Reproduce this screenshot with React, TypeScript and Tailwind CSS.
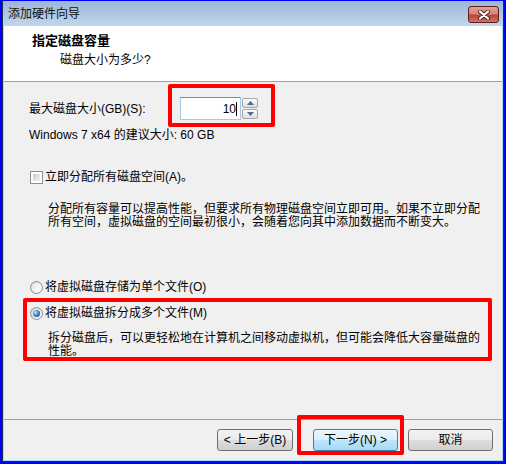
import React from 'react';

const font = "font-['Liberation_Sans','Noto_Sans_CJK_SC',sans-serif]";

const Radio: React.FC<{ checked?: boolean }> = ({ checked }) => (
  <div className="w-[13px] h-[13px] rounded-full border border-[#8e8f8f] bg-linear-to-br from-[#d4d4d4] to-[#fbfbfb] flex items-center justify-center shrink-0">
    {checked ? (
      <div className="w-[7px] h-[7px] rounded-full bg-[radial-gradient(circle_at_35%_35%,#bfe4fb,#2a6db8_60%,#1b4d8a)]" />
    ) : (
      <div className="w-[9px] h-[9px] rounded-full bg-linear-to-br from-[#e6e6e6] to-[#ffffff]" />
    )}
  </div>
);

const Checkbox: React.FC = () => (
  <div className="w-[13px] h-[13px] border border-[#8e8f8f] bg-white p-[2px] shrink-0">
    <div className="w-full h-full bg-linear-to-br from-[#cbcbcb] to-[#f6f6f6]" />
  </div>
);

const WinButton: React.FC<{ label: string; width: string; primary?: boolean; className?: string }> = ({
  label,
  width,
  primary,
  className,
}) => (
  <div
    className={
      primary
        ? `${width} ${className ?? ''} h-[22px] rounded-[3px] border border-[#3c7fb1] bg-[linear-gradient(#eaf6fd_0%,#d9f0fc_50%,#bee6fd_50%,#a7d9f5_100%)] flex items-center justify-center text-[12px] text-black`
        : `${width} ${className ?? ''} h-[22px] rounded-[3px] border border-[#707070] bg-[linear-gradient(#f2f2f2_0%,#ebebeb_50%,#dddddd_50%,#cfcfcf_100%)] flex items-center justify-center text-[12px] text-black`
    }
  >
    {label}
  </div>
);

const SpinArrow: React.FC<{ up?: boolean }> = ({ up }) => (
  <div className="w-[16px] h-[10px] border border-[#a7a7a7] rounded-[2px] bg-linear-to-b from-[#fbfbfb] to-[#dedede] flex items-center justify-center">
    <svg width="7" height="4" viewBox="0 0 7 4">
      {up ? <polygon points="0,4 7,4 3.5,0" fill="#4f6a92" /> : <polygon points="0,0 7,0 3.5,4" fill="#4f6a92" />}
    </svg>
  </div>
);

export default function App() {
  return (
    <div className={`relative w-[506px] h-[464px] bg-[#0000ff] px-[2px] pb-[2px] pt-[1px] ${font} text-black`}>
      <div className="h-full flex flex-col border-x border-b border-[#1c2c4c]">
        {/* title bar */}
        <div className="h-[25px] shrink-0 flex items-start justify-between pl-[5px] pr-[4px] bg-linear-to-b from-[#9cb6d4] to-[#c1d7ed]">
          <span className="text-[12px] leading-[16px] mt-[5px] text-[#111]">添加硬件向导</span>
          <div className="mt-[5px] w-[31px] h-[17px] rounded-[3px] border border-[#5a1f1a] bg-[linear-gradient(#e3a096_0%,#d3857a_45%,#bd4437_55%,#cf7366_100%)] flex items-center justify-center">
            <svg width="12" height="10" viewBox="0 0 12 10">
              <path d="M2 1.5 L10 8.5 M10 1.5 L2 8.5" stroke="#4a2320" strokeWidth="4" strokeLinecap="round" />
              <path d="M2 1.5 L10 8.5 M10 1.5 L2 8.5" stroke="#ffffff" strokeWidth="2.2" strokeLinecap="round" />
            </svg>
          </div>
        </div>

        {/* client */}
        <div className="flex-1 flex flex-col border-x border-b border-[#a9dcf2] bg-[#f0f0f0]">
          <div className="h-[56px] shrink-0 bg-white border-b border-[#a0a0a0] pl-[28px] pt-[7px]">
            <div className="text-[13px] leading-[16px] font-bold">指定磁盘容量</div>
            <div className="text-[12px] leading-[16px] mt-[3px] ml-[28px]">磁盘大小为多少?</div>
          </div>

          <div className="flex-1 flex flex-col pl-[25px]">
            <div className="mt-[15px] h-[23px] flex items-center">
              <span className="w-[151px] text-[12px] leading-[16px]">最大磁盘大小(GB)(S):</span>
              <div className="w-[61px] h-[23px] border border-[#a4c9e3] border-t-[#5c93c4] bg-white flex items-center justify-end pr-[3px] text-[12px] leading-[16px]">
                10
                <span className="w-px h-[14px] bg-black" />
              </div>
              <div className="ml-[1px] flex flex-col gap-[1px]">
                <SpinArrow up />
                <SpinArrow />
              </div>
            </div>

            <div className="mt-[7px] text-[12px] leading-[16px]">Windows 7 x64 的建议大小: 60 GB</div>

            <div className="mt-[26px] h-[16px] flex items-center ml-[1px] gap-[2px]">
              <Checkbox />
              <span className="text-[12px] leading-[16px]">立即分配所有磁盘空间(A)。</span>
            </div>
            <div className="mt-[18px] ml-[19px] text-[12px] leading-[13px]">
              <div>分配所有容量可以提高性能，但要求所有物理磁盘空间立即可用。如果不立即分配</div>
              <div>所有空间，虚拟磁盘的空间最初很小，会随着您向其中添加数据而不断变大。</div>
            </div>

            <div className="mt-[50px] h-[16px] flex items-center ml-[1px] gap-[2px]">
              <Radio />
              <span className="text-[12px] leading-[16px]">将虚拟磁盘存储为单个文件(O)</span>
            </div>
            <div className="mt-[10px] h-[16px] flex items-center ml-[1px] gap-[2px]">
              <Radio checked />
              <span className="text-[12px] leading-[16px]">将虚拟磁盘拆分成多个文件(M)</span>
            </div>
            <div className="mt-[11px] ml-[19px] text-[12px] leading-[13px]">
              <div>拆分磁盘后，可以更轻松地在计算机之间移动虚拟机，但可能会降低大容量磁盘的</div>
              <div>性能。</div>
            </div>
          </div>

          <div className="h-[41px] shrink-0 border-t border-[#a0a0a0] pt-[9px] pr-[9px] flex justify-end items-start">
            <WinButton label="< 上一步(B)" width="w-[76px]" />
            <WinButton label="下一步(N) >" width="w-[85px]" primary className="ml-[20px]" />
            <WinButton label="取消" width="w-[85px]" className="ml-[10px]" />
          </div>
        </div>
      </div>

      {/* red annotation boxes */}
      <div className="absolute left-[168px] top-[84px] w-[107px] h-[43px] border-4 border-[#ff0000] rounded-[2px]" />
      <div className="absolute left-[23px] top-[298px] w-[469px] h-[63px] border-4 border-[#ff0000] rounded-[2px]" />
      <div className="absolute left-[297px] top-[415px] w-[107px] h-[40px] border-4 border-[#ff0000] rounded-[2px]" />
    </div>
  );
}
